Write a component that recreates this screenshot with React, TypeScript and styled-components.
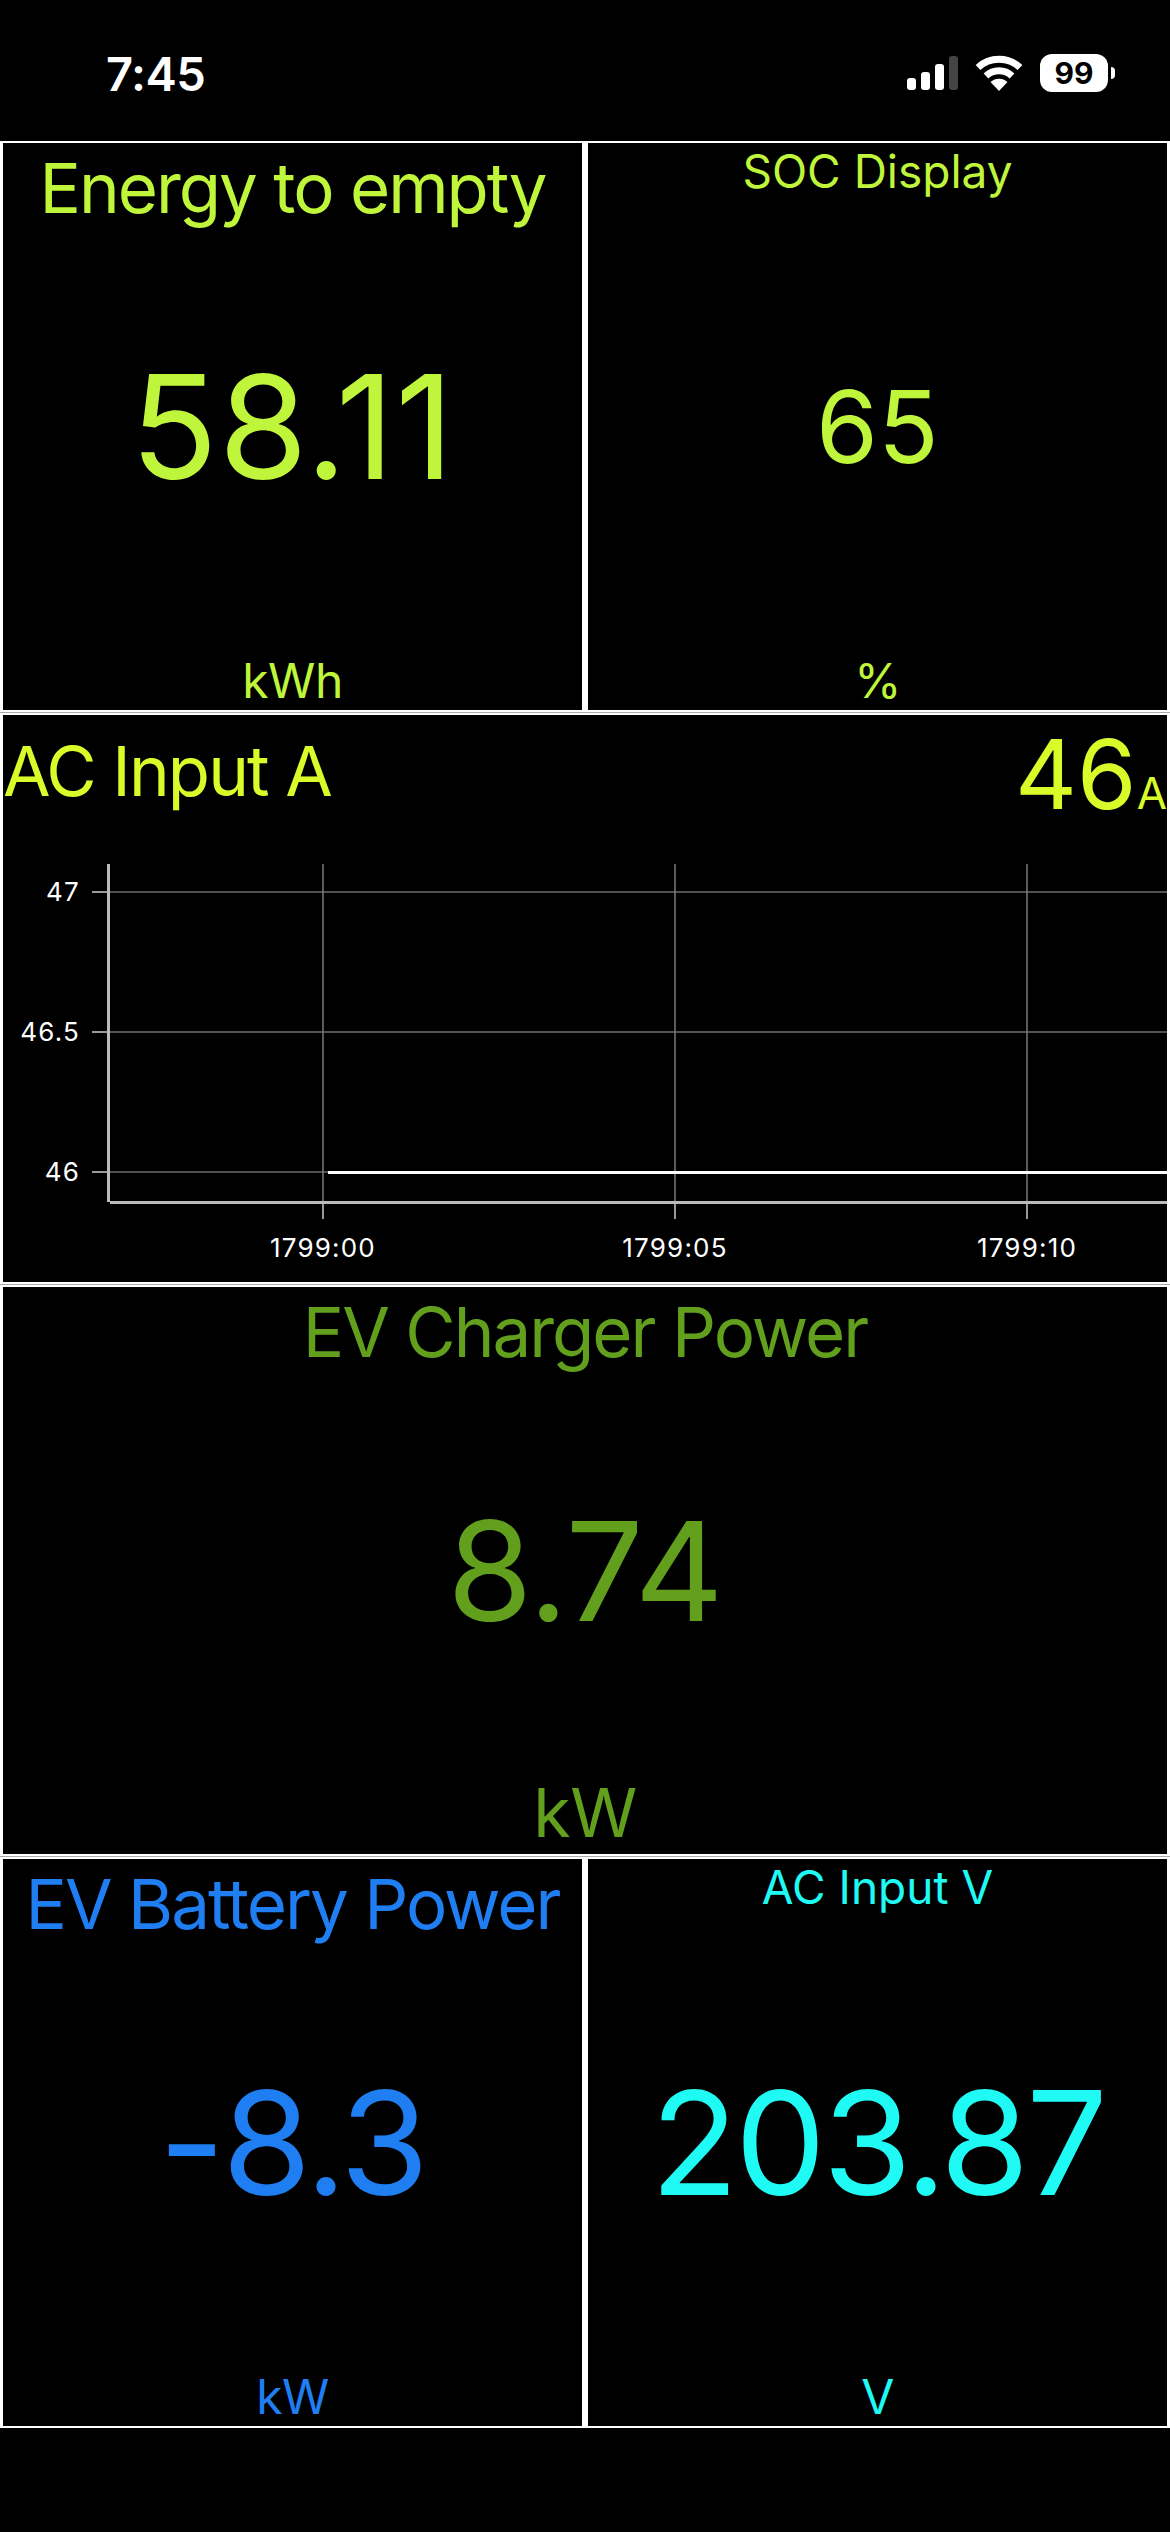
import React from 'react';
import styled, { createGlobalStyle } from 'styled-components';

const colors = {
  lime: '#bff53a',
  yellow: '#d9fb2a',
  green: '#619f1d',
  blue: '#1f7ef2',
  cyan: '#1ffaf5',
};

const GlobalStyle = createGlobalStyle`
  html, body {
    margin: 0;
    background: #000;
    font-family: Inter, "Noto Sans", sans-serif;
  }
`;

const Screen = styled.div`
  width: 1170px;
  height: 2532px;
  background: #000;
  color: #fff;
  overflow: hidden;
`;

const StatusBar = styled.div`
  display: flex;
  justify-content: space-between;
  align-items: center;
  box-sizing: border-box;
  height: 141px;
  padding: 5px 55px 0 106px;
`;

const Clock = styled.div`
  font-size: 47px;
  font-weight: 600;
  letter-spacing: -0.5px;
`;

const StatusIcons = styled.div`
  display: flex;
  align-items: center;
  gap: 17px;
`;

const Battery = styled.div`
  position: relative;
  display: flex;
  align-items: center;
  justify-content: center;
  width: 68px;
  height: 38px;
  margin-right: 7px;
  border-radius: 12px;
  background: #fff;
  color: #000;
  font-size: 30px;
  font-weight: 700;

  &::after {
    content: '';
    position: absolute;
    right: -7px;
    top: 13px;
    width: 4px;
    height: 12px;
    border-radius: 0 6px 6px 0;
    background: #fff;
  }
`;

const Board = styled.div`
  display: grid;
  grid-template-columns: 585px 585px;
  grid-auto-rows: 571px;
  row-gap: 1px;
  background: #aaa;
`;

const Cell = styled.div<{ $tint: string; $wide?: boolean }>`
  display: grid;
  grid-template-rows: 1fr 1fr 1fr;
  justify-items: center;
  box-sizing: border-box;
  min-width: 0;
  grid-column: ${(p) => (p.$wide ? 'span 2' : 'auto')};
  border: solid #fff;
  border-width: 2px 3px;
  background: #000;
  color: ${(p) => p.$tint};
`;

const Title = styled.div<{ $big?: boolean }>`
  align-self: start;
  padding-top: ${(p) => (p.$big ? 4 : 1)}px;
  font-size: ${(p) => (p.$big ? 69 : 46)}px;
  letter-spacing: ${(p) => (p.$big ? -2 : 0)}px;
  line-height: 1.2;
  white-space: nowrap;
`;

const Value = styled.div<{ $size: number; $spacing?: number }>`
  align-self: center;
  font-size: ${(p) => p.$size}px;
  letter-spacing: ${(p) => p.$spacing ?? 0}px;
  line-height: 1;
  white-space: nowrap;
`;

const Unit = styled.div<{ $size: number }>`
  align-self: end;
  font-size: ${(p) => p.$size}px;
  letter-spacing: -0.5px;
  line-height: 1.2;
`;

const ChartCell = styled.div<{ $tint: string }>`
  display: flex;
  flex-direction: column;
  box-sizing: border-box;
  grid-column: span 2;
  border: solid #fff;
  border-width: 2px 3px;
  background: #000;
  color: ${(p) => p.$tint};
`;

const ChartHeader = styled.div`
  display: flex;
  justify-content: space-between;
  align-items: flex-start;
  flex: 1;
  padding-top: 15px;
`;

const ChartTitle = styled.div`
  font-size: 69px;
  letter-spacing: -1.9px;
  line-height: 1.2;
`;

const Reading = styled.div`
  display: flex;
  align-items: baseline;
  margin-top: -4px;
  line-height: 1;
`;

const ReadingValue = styled.span`
  font-size: 96px;
`;

const ReadingUnit = styled.span`
  font-size: 44px;
`;

const AxisText = styled.text`
  fill: #fff;
  font-family: Inter, sans-serif;
  font-size: 26px;
  letter-spacing: 1.2px;
`;

function SignalIcon() {
  return (
    <svg width="51" height="34" viewBox="0 0 51 34" fill="#fff">
      <rect x="0" y="22" width="9" height="12" rx="3" />
      <rect x="14" y="16" width="9" height="18" rx="3" />
      <rect x="28" y="8" width="9" height="26" rx="3" />
      <rect x="42" y="0" width="9" height="34" rx="3" fill="#444" />
    </svg>
  );
}

function WifiIcon() {
  return (
    <svg width="48" height="36" viewBox="0 0 48 36" fill="none" stroke="#fff" strokeWidth="7">
      <path d="M3 12.5A31 31 0 0 1 45 12.5" />
      <path d="M11 21A19 19 0 0 1 37 21" />
      <path d="M24 36L15.5 27A12.5 12.5 0 0 1 32.5 27Z" fill="#fff" stroke="none" />
    </svg>
  );
}

const gridY = [892, 1032, 1172];
const gridX = [323, 675, 1027];
const yLabels = ['47', '46.5', '46'];
const xLabels = ['1799:00', '1799:05', '1799:10'];

function AmpsChart() {
  return (
    <svg width="1164" height="430" viewBox="3 852 1164 430">
      {gridY.map((y, i) => (
        <g key={y}>
          <line x1="92" x2="108" y1={y} y2={y} stroke="#999" strokeWidth="2" />
          <line x1="108" x2="1167" y1={y} y2={y} stroke="#6e6e6e" strokeWidth="1.5" />
          <AxisText x="80" y={y + 9} textAnchor="end">
            {yLabels[i]}
          </AxisText>
        </g>
      ))}
      {gridX.map((x, i) => (
        <g key={x}>
          <line x1={x} x2={x} y1="864" y2="1202" stroke="#7a7a7a" strokeWidth="1.5" />
          <line x1={x} x2={x} y1="1202" y2="1219" stroke="#999" strokeWidth="2" />
          <AxisText x={x} y="1257" textAnchor="middle">
            {xLabels[i]}
          </AxisText>
        </g>
      ))}
      <line x1="108.5" x2="108.5" y1="864" y2="1202" stroke="#bbb" strokeWidth="3" />
      <line x1="110" x2="1167" y1="1202.5" y2="1202.5" stroke="#bbb" strokeWidth="3" />
      <line x1="328" x2="1167" y1="1172.5" y2="1172.5" stroke="#fff" strokeWidth="3" />
    </svg>
  );
}

function App() {
  return (
    <Screen>
      <GlobalStyle />
      <StatusBar>
        <Clock>7:45</Clock>
        <StatusIcons>
          <SignalIcon />
          <WifiIcon />
          <Battery>99</Battery>
        </StatusIcons>
      </StatusBar>
      <Board>
        <Cell $tint={colors.lime}>
          <Title $big>Energy to empty</Title>
          <Value $size={144} $spacing={1}>58.11</Value>
          <Unit $size={48}>kWh</Unit>
        </Cell>
        <Cell $tint={colors.lime}>
          <Title>SOC Display</Title>
          <Value $size={100}>65</Value>
          <Unit $size={48}>%</Unit>
        </Cell>
        <ChartCell $tint={colors.yellow}>
          <ChartHeader>
            <ChartTitle>AC Input A</ChartTitle>
            <Reading>
              <ReadingValue>46</ReadingValue>
              <ReadingUnit>A</ReadingUnit>
            </Reading>
          </ChartHeader>
          <AmpsChart />
        </ChartCell>
        <Cell $tint={colors.green} $wide>
          <Title $big>EV Charger Power</Title>
          <Value $size={138} $spacing={-1}>8.74</Value>
          <Unit $size={68}>kW</Unit>
        </Cell>
        <Cell $tint={colors.blue}>
          <Title $big>EV Battery Power</Title>
          <Value $size={144} $spacing={-2.8}>-8.3</Value>
          <Unit $size={48}>kW</Unit>
        </Cell>
        <Cell $tint={colors.cyan}>
          <Title>AC Input V</Title>
          <Value $size={144} $spacing={-3.2}>203.87</Value>
          <Unit $size={48}>V</Unit>
        </Cell>
      </Board>
    </Screen>
  );
}

export default App;
